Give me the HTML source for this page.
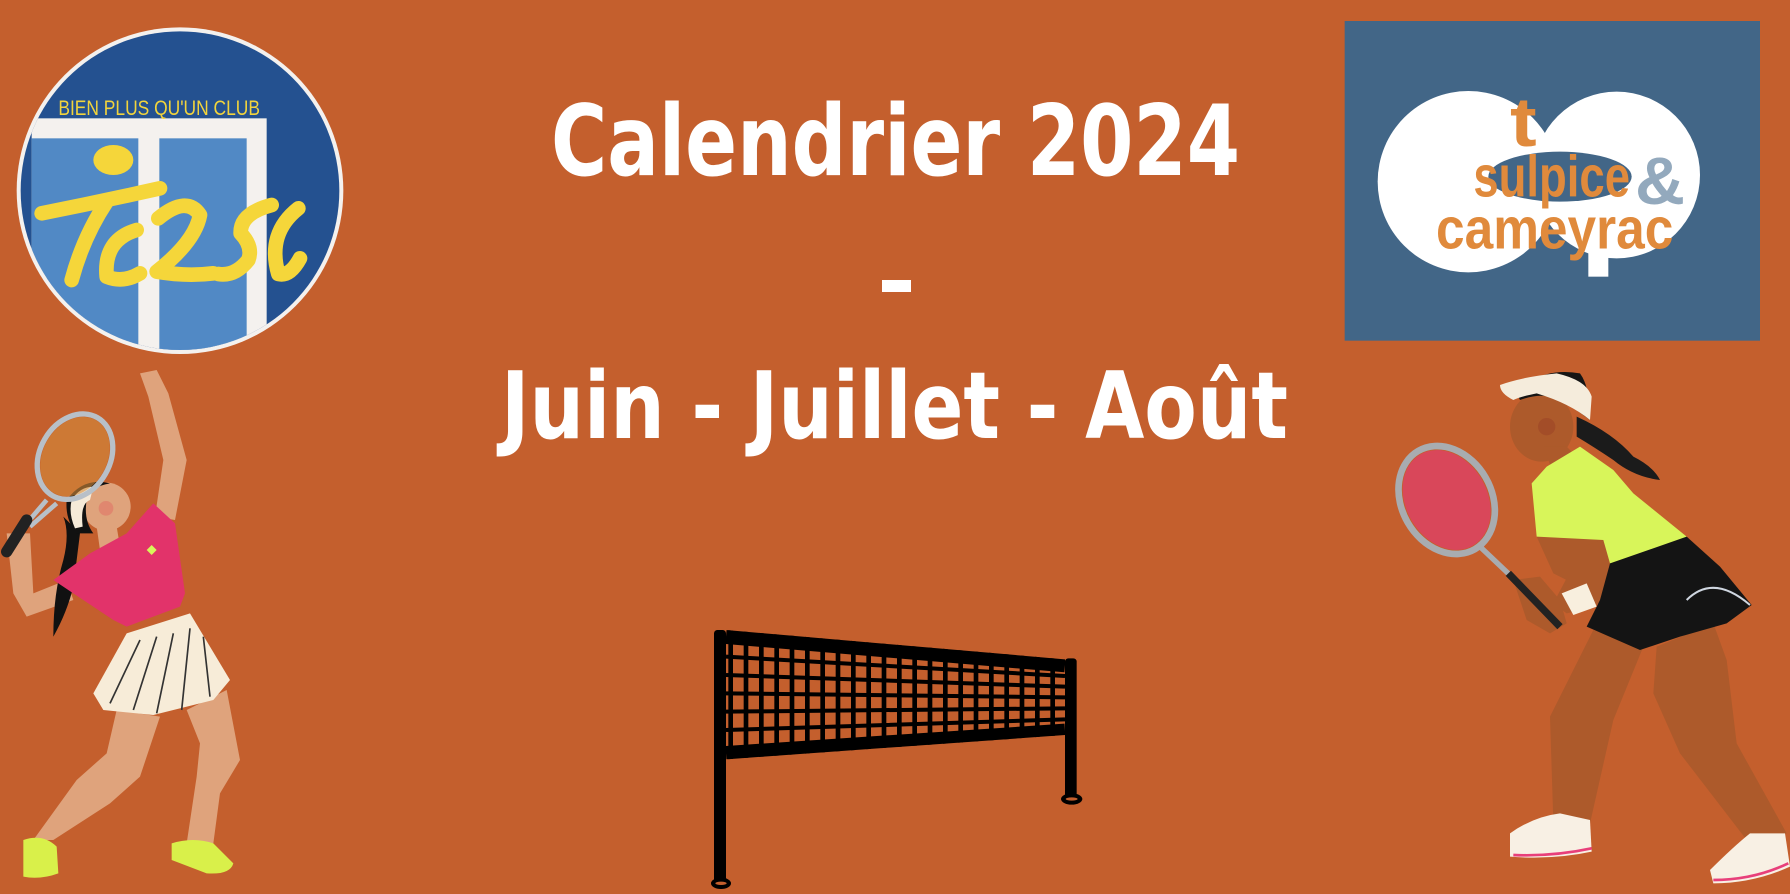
<!DOCTYPE html>
<html><head><meta charset="utf-8"><style>
html,body{margin:0;padding:0;background:#c45f2d;}
svg{display:block}
</style></head><body>
<svg width="1790" height="894" viewBox="0 0 1790 894" xmlns="http://www.w3.org/2000/svg">
<rect width="1790" height="894" fill="#c45f2d"/>

<g font-family="'DejaVu Sans','Liberation Sans',sans-serif" font-weight="bold" fill="#ffffff">
<text x="551" y="175" font-size="98" textLength="689" lengthAdjust="spacingAndGlyphs">Calendrier 2024</text>
<rect x="882" y="280" width="29" height="12"/>
<text x="501" y="438" font-size="93" textLength="787" lengthAdjust="spacingAndGlyphs">Juin - Juillet - Août</text>
</g>

<svg x="0" y="20" width="360" height="340" viewBox="0 0 1080 1020">
<defs><clipPath id="cc"><circle cx="540" cy="512" r="478"/></clipPath></defs>
<circle cx="540" cy="512" r="490" fill="#f4f1ee"/>
<circle cx="540" cy="512" r="478" fill="#245190"/>
<g clip-path="url(#cc)">
<rect x="95" y="295" width="705" height="740" fill="#f4f1ee"/>
<rect x="95" y="355" width="320" height="680" fill="#5189c5"/>
<rect x="478" y="355" width="262" height="680" fill="#5189c5"/>
</g>
<text x="175" y="285" font-family="'Liberation Sans',sans-serif" font-size="64" fill="#f2d43c" textLength="605" lengthAdjust="spacingAndGlyphs">BIEN PLUS QU'UN CLUB</text>
<ellipse cx="340" cy="420" rx="60" ry="45" fill="#f5d63a"/>
<g fill="none" stroke="#f5d63a" stroke-width="44" stroke-linecap="round" stroke-linejoin="round">
<path d="M125 580 Q300 545 480 505"/>
<path d="M320 545 Q250 650 215 780"/>
<path d="M410 630 Q310 660 320 770 Q370 790 420 760"/>
<path d="M475 595 Q560 525 600 585 Q585 665 470 755 Q560 770 640 760"/>
<path d="M815 555 Q720 580 722 640 Q760 680 745 720 Q705 770 655 762"/>
<path d="M895 565 Q800 640 835 762 Q870 770 900 715"/>
</g>
</svg>

<svg x="1330" y="0" width="460" height="360" viewBox="0 0 1380 1080">
<rect x="44" y="63" width="1246" height="959" fill="#426687"/>
<circle cx="415" cy="545" r="272" fill="#fff"/>
<circle cx="860" cy="525" r="250" fill="#fff"/>
<rect x="775" y="600" width="60" height="230" fill="#fff"/>
<ellipse cx="690" cy="530" rx="215" ry="75" fill="#426687"/>
<g font-family="'Liberation Sans',sans-serif" font-weight="bold">
<text x="540" y="438" font-size="210" fill="#e08a3c" textLength="80" lengthAdjust="spacingAndGlyphs">t</text>
<text x="430" y="590" font-size="175" fill="#e08a3c" textLength="470" lengthAdjust="spacingAndGlyphs">sulpice</text>
<text x="915" y="612" font-size="200" fill="#93a9bd" textLength="150" lengthAdjust="spacingAndGlyphs">&amp;</text>
<text x="318" y="745" font-size="175" fill="#e08a3c" textLength="712" lengthAdjust="spacingAndGlyphs">cameyrac</text>
</g>
</svg>

<svg x="700" y="620" width="390" height="274" viewBox="0 0 1170 822">
<defs><clipPath id="nc"><polygon points="78,30 1095,118 1095,345 78,418"/></clipPath></defs>
<g clip-path="url(#nc)" stroke="#000" fill="none">
<path stroke-width="14" d="M92 0V430M138 0V430M184 0V430M230 0V430M276 0V430M322 0V430M368 0V430M414 0V430M460 0V430M506 0V430M552 0V430M598 0V430M644 0V430M690 0V430M736 0V430M782 0V430M828 0V430M874 0V430M920 0V430M966 0V430M1012 0V430M1058 0V430"/>
<path stroke-width="12" d="M78 110L1095 168M78 165L1095 200M78 220L1095 232M78 275L1095 265M78 330L1095 298"/>
<path stroke-width="44" d="M78 50L1095 135M78 400L1095 333"/>
</g>
<rect x="42" y="30" width="36" height="760" rx="10" fill="#000"/>
<rect x="1095" y="115" width="35" height="420" rx="10" fill="#000"/>
<ellipse cx="63" cy="790" rx="30" ry="17" fill="#000"/><ellipse cx="63" cy="790" rx="17" ry="5" fill="#c45f2d"/>
<ellipse cx="1115" cy="537" rx="32" ry="17" fill="#000"/><ellipse cx="1115" cy="537" rx="18" ry="5" fill="#c45f2d"/>
</svg>

<svg x="0" y="360" width="280" height="534" viewBox="0 0 840 1602">
<g fill="#dfa37c">
<polygon points="420,40 470,30 505,100 560,300 525,480 465,470 490,300 445,110"/>
<polygon points="20,520 90,520 100,700 200,660 220,720 80,770 40,700"/>
<polygon points="350,1050 480,1070 420,1250 330,1330 160,1440 100,1440 230,1260 320,1180"/>
<polygon points="560,1050 680,990 720,1200 660,1300 640,1450 560,1450 590,1250 600,1150"/>
<circle cx="320" cy="440" r="72"/>
<polygon points="290,500 350,500 360,560 300,570"/>
</g>
<path d="M190 470 Q210 520 190 600 Q160 700 160 830 Q200 760 220 680 L240 520 Z" fill="#111"/>
<path d="M200 420 Q250 350 330 370 Q270 380 260 420 Q250 480 280 520 L230 520 Q195 480 200 420Z" fill="#111"/>
<path d="M215 420 Q240 380 280 380 L270 420 Q240 430 248 500 L225 505 Q205 460 215 420Z" fill="#f5ead8"/>
<circle cx="318" cy="445" r="22" fill="#e07b6a" opacity="0.7"/>
<g transform="rotate(30 225 290)">
<ellipse cx="225" cy="290" rx="105" ry="135" fill="none" stroke="#b8c0c8" stroke-width="16"/>
<ellipse cx="225" cy="290" rx="96" ry="126" fill="#d38a3a" opacity="0.6"/>
</g>
<path d="M140 420 L80 490 M170 430 L90 500" stroke="#b8c0c8" stroke-width="14"/>
<path d="M80 480 L20 575" stroke="#222" stroke-width="34" stroke-linecap="round"/>
<polygon points="160,660 270,580 380,520 460,430 525,490 555,700 540,740 380,800 340,780 220,700" fill="#e2336a"/>
<path d="M440 570 l15 -15 l15 15 l-15 15z" fill="#d8f55a"/>
<polygon points="380,820 570,760 690,960 640,1020 460,1065 310,1050 280,1000" fill="#f7ecd8"/>
<path d="M420 840 L330 1030 M470 830 L400 1050 M520 820 L470 1060 M570 805 L545 1050 M610 830 L630 1010" stroke="#333" stroke-width="5"/>
<path d="M70 1440 Q130 1420 170 1460 L175 1540 Q120 1560 70 1550Z" fill="#d9f04a"/>
<path d="M515 1450 Q580 1430 640 1450 L700 1510 Q690 1545 620 1540 L515 1500Z" fill="#d9f04a"/>
</svg>

<svg x="1380" y="360" width="410" height="534" viewBox="0 0 1230 1602">
<path d="M590 170 Q700 220 760 290 Q820 320 840 360 Q760 350 700 300 Q640 260 590 230Z" fill="#1b1b1b"/>
<g fill="#ad5a2b">
<ellipse cx="485" cy="200" rx="95" ry="105"/>
<polygon points="490,260 560,260 600,300 520,340"/>
<polygon points="470,530 680,540 700,640 560,660 520,640"/>
<polygon points="610,560 780,500 790,640 640,740 560,760 520,730"/>
<polygon points="400,660 480,650 540,720 560,790 510,820 440,780"/>
<polygon points="640,810 790,860 700,1080 630,1390 520,1385 510,1070"/>
<polygon points="830,860 1000,790 1040,900 1070,1150 1220,1420 1100,1440 900,1180 820,1000"/>
</g>
<path d="M410 100 Q480 20 600 40 Q630 80 630 180 Q590 150 560 130 Q500 90 420 120Z" fill="#151515"/>
<path d="M360 75 Q430 50 530 40 Q620 60 635 110 L630 180 Q570 130 470 100 Q420 110 400 120 Q360 100 360 75Z" fill="#f5ecdc"/>
<circle cx="500" cy="200" r="26" fill="#9c4426" opacity="0.6"/>
<g transform="rotate(-30 200 420)">
<ellipse cx="200" cy="420" rx="135" ry="170" fill="none" stroke="#a8acb0" stroke-width="20"/>
<ellipse cx="200" cy="420" rx="122" ry="158" fill="#d9475a"/>
</g>
<path d="M300 560 L395 650" stroke="#a8acb0" stroke-width="16"/>
<path d="M385 640 L540 800" stroke="#222" stroke-width="22"/>
<polygon points="455,370 500,320 600,260 700,330 760,400 920,530 900,560 810,610 690,610 670,540 470,530" fill="#d8f55a"/>
<polygon points="690,610 920,530 1020,620 1115,735 1040,790 900,830 780,870 620,800 660,720" fill="#141414"/>
<path d="M920 720 Q1000 640 1110 735" stroke="#cfd6e0" stroke-width="6" fill="none"/>
<polygon points="545,700 620,670 650,740 580,765" fill="#f8efde"/>
<path d="M390 1420 Q460 1370 540 1360 L630 1380 L635 1475 Q520 1500 390 1490Z" fill="#f8f0e4"/>
<path d="M990 1530 Q1060 1460 1110 1420 L1215 1420 L1230 1520 Q1120 1570 1000 1570Z" fill="#f8f0e4"/>
<path d="M400 1485 Q520 1490 635 1465 M1000 1560 Q1120 1560 1225 1510" stroke="#e83f7a" stroke-width="8" fill="none"/>
</svg>
</svg>
</body></html>
